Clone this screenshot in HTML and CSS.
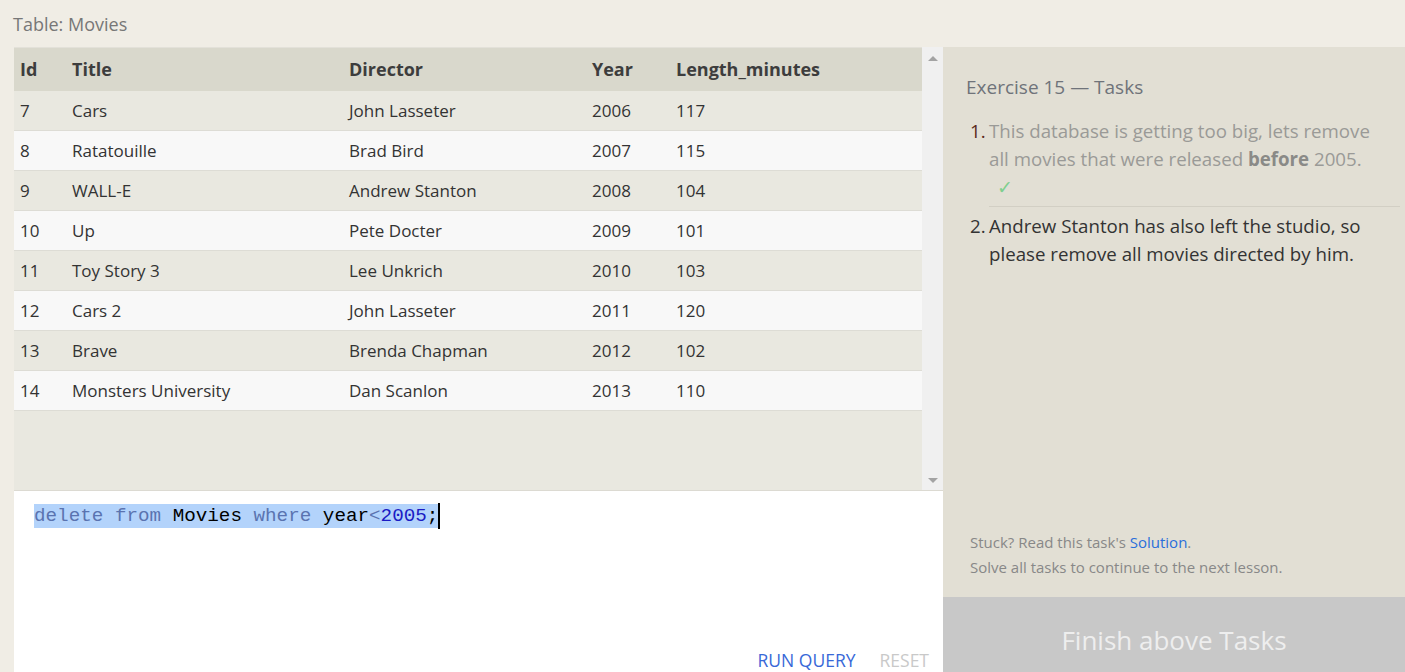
FILE: index.html
```html
<!DOCTYPE html>
<html>
<head>
<meta charset="utf-8">
<link rel="stylesheet" href="styles.css">
</head>
<body>
<div class="caption">Table: Movies</div>
<div class="main">
  <div class="left">
    <div class="viewport">
      <div class="tablewrap">
        <table class="data">
          <thead>
            <tr><th class="c-id">Id</th><th class="c-title">Title</th><th class="c-dir">Director</th><th class="c-year">Year</th><th>Length_minutes</th></tr>
          </thead>
          <tbody>
            <tr><td>7</td><td>Cars</td><td>John Lasseter</td><td>2006</td><td>117</td></tr>
            <tr><td>8</td><td>Ratatouille</td><td>Brad Bird</td><td>2007</td><td>115</td></tr>
            <tr><td>9</td><td>WALL-E</td><td>Andrew Stanton</td><td>2008</td><td>104</td></tr>
            <tr><td>10</td><td>Up</td><td>Pete Docter</td><td>2009</td><td>101</td></tr>
            <tr><td>11</td><td>Toy Story 3</td><td>Lee Unkrich</td><td>2010</td><td>103</td></tr>
            <tr><td>12</td><td>Cars 2</td><td>John Lasseter</td><td>2011</td><td>120</td></tr>
            <tr><td>13</td><td>Brave</td><td>Brenda Chapman</td><td>2012</td><td>102</td></tr>
            <tr><td>14</td><td>Monsters University</td><td>Dan Scanlon</td><td>2013</td><td>110</td></tr>
          </tbody>
        </table>
      </div>
      <div class="scrollbar">
        <span class="arrow up"></span>
        <span class="arrow down"></span>
      </div>
    </div>
    <div class="editor">
      <div class="code"><span class="sel"><span class="kw">delete</span> <span class="kw">from</span> Movies <span class="kw">where</span> year<span class="op">&lt;</span><span class="num">2005</span>;</span><span class="cursor"></span></div>
      <div class="actions">
        <span class="run">RUN QUERY</span>
        <span class="reset">RESET</span>
      </div>
    </div>
  </div>
  <div class="right">
    <div class="tasks">
      <h2 class="title">Exercise 15 — Tasks</h2>
      <ol class="list">
        <li class="done"><span class="n">1.</span><div class="t"><p class="para">This database is getting too big, lets remove all movies that were released <b>before</b> 2005.</p><div class="check">✓</div></div></li>
        <li class="todo"><span class="n">2.</span><div class="t"><p class="para">Andrew Stanton has also left the studio, so please remove all movies directed by him.</p></div></li>
      </ol>
      <div class="help">
        <div>Stuck? Read this task's <span class="link">Solution</span>.</div>
        <div>Solve all tasks to continue to the next lesson.</div>
      </div>
    </div>
    <div class="finish">Finish above Tasks</div>
  </div>
</div>
</body>
</html>
```

FILE: styles.css
```css
* { box-sizing: border-box; }
html, body { margin: 0; padding: 0; }
body {
  background: #f0ede5;
  font-family: "Open Sans", "Liberation Sans", sans-serif;
  color: #333;
  width: 1405px;
  height: 672px;
  overflow: hidden;
}
.caption {
  height: 47px;
  padding: 12px 0 0 13px;
  font-size: 18px;
  color: #777;
}
.main {
  display: flex;
  height: 625px;
}
.left {
  margin-left: 14px;
  width: 929px;
  display: flex;
  flex-direction: column;
}
.viewport {
  height: 444px;
  display: flex;
  background: #e9e8e0;
  border-bottom: 1px solid #dcdad2;
}
.tablewrap {
  flex: 1;
}
.data {
  width: 100%;
  border-collapse: collapse;
  font-size: 17px;
}
.data th {
  background: #d9d8cc;
  text-align: left;
  font-weight: 700;
  font-size: 18px;
  color: #3d3d3d;
  height: 43px;
  padding: 0;
  border-top: 1px solid #e3e1d9;
}
.data td {
  height: 40px;
  padding: 0;
  border-bottom: 1px solid #dddcd5;
  color: #333;
}
.data th:first-child, .data td:first-child { padding-left: 6px; }
.data tbody tr:nth-child(odd) td { background: #e9e8e0; }
.data tbody tr:nth-child(even) td { background: #f8f8f8; }
.data .c-id { width: 58px; }
.data .c-title { width: 277px; }
.data .c-dir { width: 243px; }
.data .c-year { width: 84px; }
.scrollbar {
  width: 21px;
  background: #f0f0f0;
  display: flex;
  flex-direction: column;
  justify-content: space-between;
  align-items: center;
  padding: 9px 0 7px;
}
.arrow {
  width: 0; height: 0;
  border-left: 5px solid transparent;
  border-right: 5px solid transparent;
}
.arrow.up { border-bottom: 5px solid #a3a3a3; }
.arrow.down { border-top: 5px solid #a3a3a3; }
.editor {
  flex: 1;
  background: #fff;
  display: flex;
  flex-direction: column;
  justify-content: space-between;
  padding: 12px 14px 0 20px;
}
.code {
  font-family: "Liberation Mono", "DejaVu Sans Mono", monospace;
  font-size: 19.25px;
  line-height: 24px;
  color: #000;
  display: flex;
  align-items: center;
}
.sel { background: #b3d3fb; }
.kw { color: #5a73b0; }
.op { color: #5a73b0; }
.num { color: #1b1bc4; }
.cursor {
  display: inline-block;
  width: 2px;
  height: 26px;
  background: #000;
}
.actions {
  display: flex;
  justify-content: flex-end;
  gap: 24px;
  font-size: 17.5px;
  height: 24px;
  line-height: 24px;
}
.run { color: #3868d8; }
.reset { color: #c9c9c9; }
.right {
  flex: 1;
  display: flex;
  flex-direction: column;
  background: #e2dfd4;
}
.tasks {
  flex: 1;
  padding: 27px 5px 0 23px;
  display: flex;
  flex-direction: column;
}
.title {
  margin: 0;
  font-size: 19px;
  font-weight: 400;
  color: #6f737a;
  line-height: 26px;
}
.list {
  list-style: none;
  margin: 17px 0 0 0;
  padding: 0;
  font-size: 18.7px;
  line-height: 28px;
}
.list li {
  display: flex;
}
.list .n {
  width: 23px;
  flex: none;
  padding-left: 4px;
}
.list .t { flex: 1; }
.para { margin: 0; padding-right: 14px; }
.done { color: #9a9a97; }
.done .n { color: #5a2a20; }
.done .t {
  border-bottom: 1px solid #d2cfc4;
  padding-bottom: 5px;
}
.done b { color: #8a8a87; }
.check {
  color: #7fcf8f;
  padding-left: 8px;
  line-height: 28px;
}
.todo { color: #333; margin-top: 5px; }
.todo .n { color: #333; }
.help {
  margin-top: auto;
  padding: 0 0 17px 4px;
  font-size: 15px;
  line-height: 25px;
  color: #888;
}
.link { color: #2a6fdb; }
.finish {
  height: 75px;
  background: #c8c8c8;
  color: #eeeeee;
  font-size: 26px;
  display: flex;
  align-items: center;
  justify-content: center;
  padding-top: 11px;
}
```
